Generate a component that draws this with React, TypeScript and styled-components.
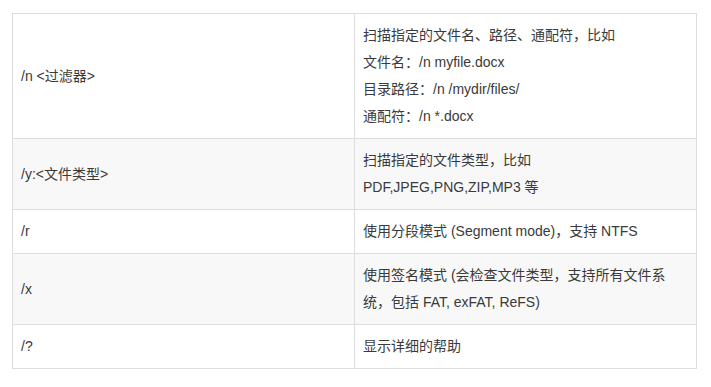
import styled, { createGlobalStyle } from "styled-components";

const GlobalStyle = createGlobalStyle`
    html, body {
        margin: 0;
        padding: 0;
        background-color: #FFFFFF;
    }
`;

const Page = styled.div`
    padding: 13px 14px 0 12px;
`;

const Table = styled.table`
    width: 685px;
    border-collapse: collapse;
    table-layout: fixed;
    font-family: "Liberation Sans", "Noto Sans CJK SC", sans-serif;
    font-size: 14px;
    line-height: 27px;
    color: #3A3A3A;
`;

const Row = styled.tr<{ $shaded?: boolean }>`
    background-color: ${({ $shaded }) => ($shaded ? "#F8F8F8" : "#FFFFFF")};
`;

const Cell = styled.td`
    border: 1px solid #DDDDDD;
    padding: 8px 8px;
    vertical-align: middle;
    text-align: left;
`;

const Line = styled.div`
    white-space: nowrap;
`;

const rows: { cmd: string; desc: string[] }[] = [
    {
        cmd: "/n <过滤器>",
        desc: [
            "扫描指定的文件名、路径、通配符，比如",
            "文件名：/n myfile.docx",
            "目录路径：/n /mydir/files/",
            "通配符：/n *.docx",
        ],
    },
    {
        cmd: "/y:<文件类型>",
        desc: ["扫描指定的文件类型，比如", "PDF,JPEG,PNG,ZIP,MP3 等"],
    },
    {
        cmd: "/r",
        desc: ["使用分段模式 (Segment mode)，支持 NTFS"],
    },
    {
        cmd: "/x",
        desc: ["使用签名模式 (会检查文件类型，支持所有文件系", "统，包括 FAT, exFAT, ReFS)"],
    },
    {
        cmd: "/?",
        desc: ["显示详细的帮助"],
    },
];

export default function App() {
    return (
        <Page>
            <GlobalStyle />
            <Table>
                <colgroup>
                    <col style={{ width: 342 }} />
                    <col />
                </colgroup>
                <tbody>
                    {rows.map((row, i) => (
                        <Row key={row.cmd} $shaded={i % 2 === 1}>
                            <Cell>{row.cmd}</Cell>
                            <Cell>
                                {row.desc.map((line) => (
                                    <Line key={line}>{line}</Line>
                                ))}
                            </Cell>
                        </Row>
                    ))}
                </tbody>
            </Table>
        </Page>
    );
}
